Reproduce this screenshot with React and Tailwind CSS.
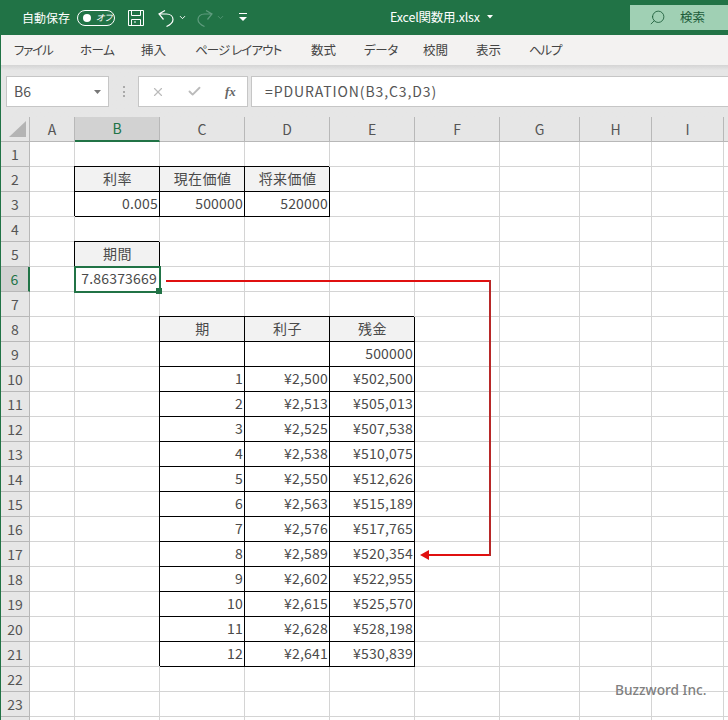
import { ChevronDown, Search, X, Check } from "lucide-react";

const font = "font-['Noto_Sans_CJK_JP','Noto_Sans',sans-serif]";

const columns = [
  { name: "A", width: "w-[45px]" },
  { name: "B", width: "w-[85px]" },
  { name: "C", width: "w-[85px]" },
  { name: "D", width: "w-[85px]" },
  { name: "E", width: "w-[85px]" },
  { name: "F", width: "w-[85px]" },
  { name: "G", width: "w-[80px]" },
  { name: "H", width: "w-[72px]" },
  { name: "I", width: "w-[72px]" },
  { name: "", width: "w-[10px]" },
];

const tabs = [
  { t: "ファイル", w: "w-[66px] tracking-[-1.2px]" },
  { t: "ホーム", w: "w-[61px] tracking-[-0.5px]" },
  { t: "挿入", w: "w-[54px]" },
  { t: "ページ レイアウト", w: "w-[116px] tracking-[-0.9px]" },
  { t: "数式", w: "w-[53px]" },
  { t: "データ", w: "w-[59px] tracking-[-0.3px]" },
  { t: "校閲", w: "w-[53px]" },
  { t: "表示", w: "w-[53px]" },
  { t: "ヘルプ", w: "w-[53px] tracking-[-1.2px]" },
];

// cell contents by row number; head = true means a grey heading cell
const data = {
  2: { B: { t: "利率", head: true }, C: { t: "現在価値", head: true }, D: { t: "将来価値", head: true } },
  3: { B: { t: "0.005" }, C: { t: "500000" }, D: { t: "520000" } },
  5: { B: { t: "期間", head: true } },
  8: { C: { t: "期", head: true }, D: { t: "利子", head: true }, E: { t: "残金", head: true } },
  9: { C: { t: "" }, D: { t: "" }, E: { t: "500000" } },
};

const schedule = [
  ["¥2,500", "¥502,500"],
  ["¥2,513", "¥505,013"],
  ["¥2,525", "¥507,538"],
  ["¥2,538", "¥510,075"],
  ["¥2,550", "¥512,626"],
  ["¥2,563", "¥515,189"],
  ["¥2,576", "¥517,765"],
  ["¥2,589", "¥520,354"],
  ["¥2,602", "¥522,955"],
  ["¥2,615", "¥525,570"],
  ["¥2,628", "¥528,198"],
  ["¥2,641", "¥530,839"],
];
schedule.forEach((r, i) => {
  data[10 + i] = { C: { t: String(i + 1) }, D: { t: r[0] }, E: { t: r[1] } };
});

function Cell({ col, cell, active }) {
  const base = `${col.width} h-[25px] shrink-0 flex items-center pb-[2px] text-[14px] tracking-[0.2px] text-[#4a4a4a]`;
  if (active) {
    return (
      <div className={`${base} relative justify-end pr-[2px] border-r border-b border-[#d4d4d4]`}>
        7.86373669
        <div className="absolute left-[-1px] top-[-1px] w-[87px] h-[27px] border-2 border-[#217346]" />
        <div className="absolute right-[-3px] bottom-[-3px] w-[6px] h-[6px] bg-[#217346]" />
      </div>
    );
  }
  if (!cell) return <div className={`${base} border-r border-b border-[#d4d4d4]`} />;
  return (
    <div
      className={`${base} shadow-[inset_-1px_-1px_0_#000,-1px_-1px_0_#000] ${
        cell.head ? "justify-center bg-[#f2f2f2] text-[14.5px] tracking-[0.4px]" : "justify-end pr-[2px]"
      }`}
    >
      {cell.t}
    </div>
  );
}

function Row({ n }) {
  const isActive = n === 6;
  return (
    <div className="flex h-[25px]">
      <div
        className={`w-[29px] shrink-0 h-[25px] flex items-center justify-center text-[14px] border-b border-[#b8b8b8] ${
          isActive
            ? "bg-[#d2d2d2] text-[#217346] border-r-2 border-r-[#217346]"
            : "bg-[#e6e6e6] text-[#555] border-r border-r-[#b8b8b8]"
        }`}
      >
        {n < 24 ? n : ""}
      </div>
      {columns.map((col) => (
        <Cell key={col.name} col={col} cell={data[n]?.[col.name]} active={isActive && col.name === "B"} />
      ))}
    </div>
  );
}

export default function App() {
  const rows = Array.from({ length: 24 }, (_, i) => i + 1);

  return (
    <div className={`${font} relative w-[728px] h-[720px] overflow-hidden bg-white`}>
      {/* title bar */}
      <div className="h-[35px] bg-[#217346] flex items-center text-white relative [font-feature-settings:'palt']">
        <span className="ml-[22px] text-[12px]">自動保存</span>
        <div className="ml-[7px] w-[38px] h-[16px] rounded-full border border-white flex items-center pl-[5px] gap-[5px]">
          <div className="w-[8px] h-[8px] rounded-full bg-white" />
          <span className="text-[9px] italic leading-none">オフ</span>
        </div>
        <svg className="ml-[13px]" width="16" height="16" viewBox="0 0 16 16" fill="none" stroke="#fff" strokeWidth="1">
          <path d="M.5.5h15v15H.5z" />
          <path d="M3.5.5v5h9v-5M3.5 15.5v-6h9v6M6 12h2" />
        </svg>
        <svg className="ml-[14px]" width="17" height="18" viewBox="0 0 17 18" fill="none" stroke="#fff" strokeWidth="1.2">
          <path d="M7 1.5 1 5l4.5 5.5M1 5h7.5c4 0 6.5 2.5 6.5 5.5 0 3-2 5-6.5 7" />
        </svg>
        <ChevronDown className="ml-[3px]" size={9} strokeWidth={2.5} />
        <svg className="ml-[10px]" width="17" height="18" viewBox="0 0 17 18" fill="none" stroke="#5f9c7e" strokeWidth="1.2">
          <path d="M9 1.5 15 5l-4.5 5.5M15 5H7.5c-4 0-6.5 2.5-6.5 5.5 0 3 2 5 6.5 7" />
        </svg>
        <ChevronDown className="ml-[2px] text-[#5f9c7e]" size={9} strokeWidth={2} />
        <svg className="ml-[14px]" width="8" height="9" viewBox="0 0 8 9" fill="#fff">
          <path d="M0 0h8v1H0zM0 4h8L4 8z" />
        </svg>
        <div className="absolute left-[390px] top-[8px] flex items-center text-[12.5px] tracking-[-0.2px] [font-feature-settings:normal]">
          <span>Excel関数用.xlsx</span>
          <svg className="ml-[7px]" width="6" height="4" viewBox="0 0 6 4" fill="#fff">
            <path d="M0 0h6L3 3.5z" />
          </svg>
        </div>
        <div className="ml-auto mt-[5px] mb-[5px] w-[98px] h-[25px] bg-[#a0d0b4] flex items-center text-[#1c5c3a]">
          <Search className="ml-[19px] -scale-x-100" size={17} strokeWidth={1.2} />
          <span className="ml-[14px] text-[12.5px]">検索</span>
        </div>
      </div>

      <div className="border-l border-[#217346]">
        {/* ribbon tabs */}
        <div className="h-[30px] bg-[#f3f2f1] flex items-center pl-[13px] text-[12.5px] text-[#444] [font-feature-settings:'palt']">
          {tabs.map((tab) => (
            <span key={tab.t} className={`${tab.w} shrink-0`}>
              {tab.t}
            </span>
          ))}
        </div>

        {/* formula bar */}
        <div className="h-[52px] bg-[#e6e6e6] bg-gradient-to-b from-[#d4d4d4] from-0% to-[#e6e6e6] to-[10%] flex items-start pt-[11px]">
          <div className="ml-[5px] w-[103px] h-[31px] bg-white border border-[#c6c6c6] flex items-center pl-[7px] text-[14px] text-[#555]">
            B6
            <svg className="ml-auto mr-[7px]" width="7" height="4" viewBox="0 0 7 4" fill="#777">
              <path d="M0 0h7L3.5 4z" />
            </svg>
          </div>
          <div className="ml-[14px] w-[3px] h-[11px] mt-[10px] border-l-2 border-dotted border-[#aaa]" />
          <div className="ml-[12px] w-[110px] h-[31px] bg-white border border-[#c6c6c6] flex items-center">
            <X className="ml-[12px] text-[#bbb]" size={14} strokeWidth={2} />
            <Check className="ml-[22px] text-[#bbb]" size={15} strokeWidth={3} />
            <span className="ml-[23px] text-[13px] italic font-['Liberation_Serif',serif] font-bold text-[#666]">fx</span>
          </div>
          <div className="ml-[3px] flex-1 h-[31px] bg-white border border-r-0 border-[#c6c6c6] flex items-center pb-[1px] pl-[13px] text-[14px] tracking-[0.9px] text-[#555]">
            =PDURATION(B3,C3,D3)
          </div>
        </div>

        {/* column headers */}
        <div className="flex h-[25px] bg-[#e6e6e6]">
          <div className="w-[29px] shrink-0 relative border-r border-b border-[#b8b8b8]">
            <div className="absolute right-[3px] bottom-[4px] w-0 h-0 border-l-[17px] border-l-transparent border-b-[16px] border-b-[#b4b4b4]" />
          </div>
          {columns.map((col) => (
            <div
              key={col.name}
              className={`${col.width} shrink-0 flex items-center justify-center text-[14px] border-r border-[#b8b8b8] ${
                col.name === "B"
                  ? "bg-[#d2d2d2] text-[#217346] border-b-2 border-b-[#217346]"
                  : "text-[#555] border-b border-b-[#b8b8b8]"
              }`}
            >
              {col.name}
            </div>
          ))}
        </div>

        {/* sheet */}
        {rows.map((n) => (
          <Row key={n} n={n} />
        ))}
      </div>

      {/* red arrow drawn over the sheet */}
      <svg className="absolute left-0 top-0 pointer-events-none" width="728" height="720" fill="none">
        <path d="M166 281h325M426 555h65" stroke="#e01010" strokeWidth="2" />
        <path d="M490 280v276" stroke="#b82828" strokeWidth="2" />
        <path d="M420 555l9-5v10z" fill="#e01010" />
      </svg>

      <div className="absolute left-[615px] top-[680px] text-[13.7px] text-[#808080] font-['Noto_Sans',sans-serif] font-medium">
        Buzzword Inc.
      </div>
    </div>
  );
}
